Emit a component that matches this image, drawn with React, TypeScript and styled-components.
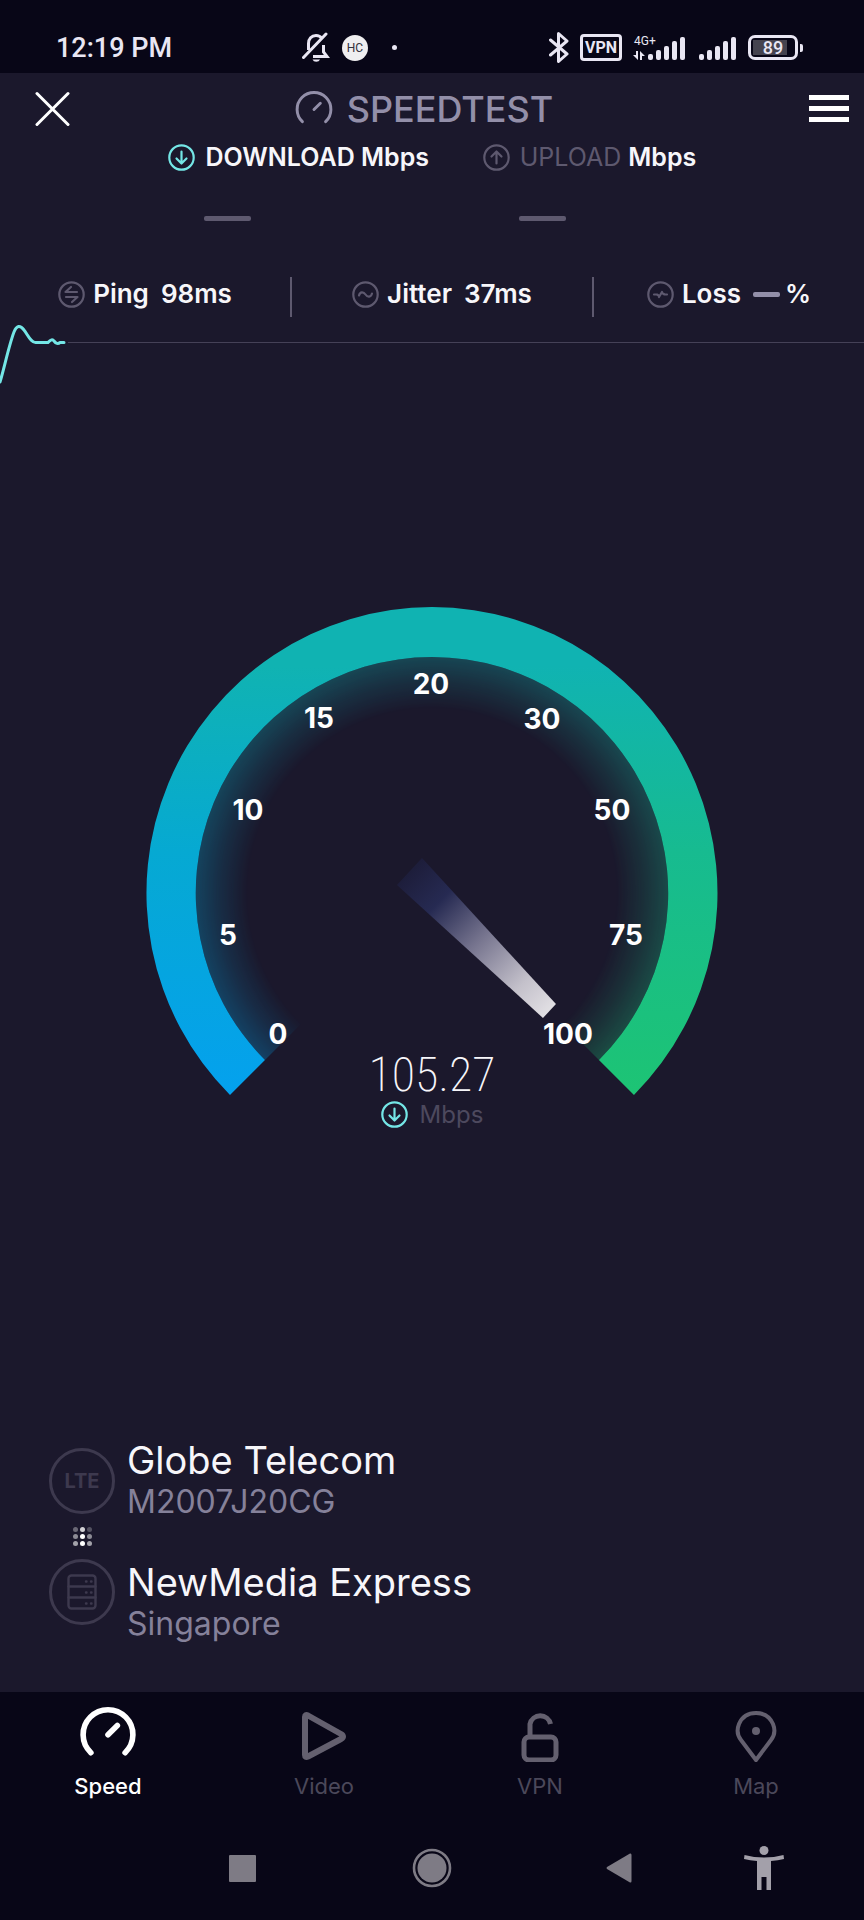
import React from "react";
import styled, { createGlobalStyle } from "styled-components";

const color = {
  page: "#1b182c",
  bar: "#080617",
  text: "#f7f6fa",
  title: "#938fa9",
  sub: "#85819a",
  muted: "#5e596f",
  faint: "#3d394e",
  cyan: "#74e6e6",
};

const GlobalStyle = createGlobalStyle`
  *, *::before, *::after { box-sizing: border-box; }
  body {
    margin: 0;
    background: ${color.bar};
    color: ${color.text};
    font-family: Inter, "Liberation Sans", sans-serif;
  }
  button {
    border: 0;
    padding: 0;
    background: none;
    color: inherit;
    font: inherit;
    cursor: pointer;
  }
  svg { display: block; flex: none; }
`;

const Screen = styled.div`
  display: flex;
  flex-direction: column;
  min-height: 100vh;
  background: ${color.page};
`;

/* ---------- status bar ---------- */

const StatusBar = styled.header`
  display: grid;
  grid-template-columns: auto 1fr auto;
  align-items: center;
  height: 73px;
  padding: 22px 60px 0 56px;
  background: ${color.bar};
  color: #e9e6f3;
  font-family: Roboto, sans-serif;
`;

const Clock = styled.time`
  width: 246px;
  font-size: 27px;
  line-height: 32px;
  font-weight: 500;
`;

const StatusGroup = styled.div<{ $gap: number }>`
  display: flex;
  align-items: center;
  gap: ${(p) => p.$gap}px;
`;

const ContactBadge = styled.span`
  display: grid;
  place-items: center;
  width: 26px;
  height: 26px;
  border-radius: 50%;
  background: #efeef0;
  color: #33313c;
  font-size: 12px;
  line-height: 12px;
`;

const MoreDot = styled.span`
  width: 5px;
  height: 5px;
  margin-left: 12px;
  border-radius: 50%;
  background: #e9e6f3;
`;

const VpnBadge = styled.span`
  width: 42px;
  height: 27px;
  border: 3px solid currentColor;
  border-radius: 4px;
  font-size: 16px;
  line-height: 21px;
  font-weight: 700;
  text-align: center;
`;

const Battery = styled.span`
  position: relative;
  width: 50px;
  height: 25px;
  margin-right: 6px;
  border: 3px solid currentColor;
  border-radius: 7px;
  background: linear-gradient(#45434f, #45434f) 2px 2px / 34px 15px no-repeat;
  font-size: 18px;
  line-height: 20px;
  font-weight: 500;
  text-align: center;

  &::after {
    content: "";
    position: absolute;
    top: 6px;
    right: -8px;
    width: 3px;
    height: 8px;
    border-radius: 0 2px 2px 0;
    background: currentColor;
  }
`;

const BellOff = () => (
  <svg width="28" height="31" viewBox="0 0 28 31" fill="none" stroke="currentColor" strokeWidth="3">
    <path d="M20 6.500C18.500 4.500 16.500 3.500 14 3.500C9.500 3.500 6.500 7 6.500 11.500V18" />
    <path d="M11 24.500H25L21.500 20V13" />
    <path d="M1.500 25.500L24 2" strokeLinecap="round" />
    <path d="M10.500 27.500H18A4 3.500 0 0 1 10.500 27.500Z" fill="currentColor" stroke="none" />
  </svg>
);

const BluetoothIcon = () => (
  <svg width="20" height="31" viewBox="0 0 20 31" fill="none" stroke="currentColor" strokeWidth="3" strokeLinejoin="round" strokeLinecap="round">
    <path d="M1.500 8L18 22L9.500 29.500V1.500L18 9L1.500 23" />
  </svg>
);

const bars = [0, 1, 2, 3, 4];

const CellSignal = () => (
  <svg width="54" height="28" viewBox="0 0 54 28" fill="currentColor">
    <text x="1" y="11" fontSize="12" fontFamily="Roboto, sans-serif">4G+</text>
    <path d="M5 17V26L0 21H3V17ZM7 26V17L12 22H9V26Z" />
    {bars.map((i) => (
      <rect key={i} x={15 + i * 8} y={[20, 16, 12, 7, 3][i]} width="5" height={[6, 10, 14, 19, 23][i]} rx="2" />
    ))}
  </svg>
);

const Signal = () => (
  <svg width="39" height="28" viewBox="0 0 39 28" fill="currentColor">
    {bars.map((i) => (
      <rect key={i} x={1 + i * 8} y={[20, 16, 12, 7, 3][i]} width="5" height={[6, 10, 14, 19, 23][i]} rx="2" />
    ))}
  </svg>
);

/* ---------- title bar ---------- */

const TitleBar = styled.div`
  display: flex;
  align-items: center;
  justify-content: space-between;
  height: 71px;
  padding: 0 15px 0 35px;
`;

const IconButton = styled.button`
  display: grid;
  place-items: center;
  width: 40px;
  height: 40px;
`;

const Brand = styled.h1`
  display: flex;
  align-items: center;
  gap: 14px;
  margin: 0;
  padding-right: 36px;
  color: ${color.title};
  font-size: 36px;
  line-height: 40px;
  font-weight: 500;
`;

const GaugeIcon = ({ size, stroke }: { size: number; stroke: number }) => (
  <svg width={size} height={size} viewBox="0 0 36 36" fill="none" stroke="currentColor" strokeWidth={stroke} strokeLinecap="round">
    <path d="M7 30A16 16 0 1 1 29 30" />
    <path d="M18 18.500L24 12.500" />
  </svg>
);

/* ---------- results ---------- */

const Results = styled.section`
  display: grid;
  grid-template-columns: 314fr 381fr;
  padding-left: 19.500%;
`;

const Result = styled.div`
  display: flex;
  flex-direction: column;
  gap: 45px;
`;

const ResultTitle = styled.div`
  display: flex;
  align-items: center;
  gap: 10px;
  font-size: 25px;
  line-height: 27px;
  font-weight: 600;
  white-space: nowrap;
`;

const ResultName = styled.span<{ $idle?: boolean }>`
  color: ${(p) => (p.$idle ? color.muted : color.text)};
  font-weight: ${(p) => (p.$idle ? 400 : 600)};

  & + & { margin-left: -3px; }
`;

const Dash = styled.span<{ $small?: boolean }>`
  width: ${(p) => (p.$small ? 27 : 47)}px;
  height: 5px;
  margin-left: ${(p) => (p.$small ? 0 : 36)}px;
  border-radius: 2px;
  background: ${(p) => (p.$small ? color.title : color.muted)};
`;

const CircleIcon = ({ tint, children }: { tint: string; children: React.ReactNode }) => (
  <svg width="27" height="27" viewBox="0 0 27 27" fill="none" stroke={tint} strokeWidth="2.200" strokeLinecap="round" strokeLinejoin="round">
    <circle cx="13.500" cy="13.500" r="12.200" />
    {children}
  </svg>
);

const DownIcon = () => (
  <CircleIcon tint={color.cyan}>
    <path d="M13.500 7.500V19M8.500 14.500L13.500 19.500L18.500 14.500" />
  </CircleIcon>
);

const Metrics = styled.section`
  display: grid;
  grid-template-columns: 290fr 2px 300fr 2px 270fr;
  height: 40px;
  margin-top: 56px;
`;

const Metric = styled.div`
  display: flex;
  align-items: center;
  justify-content: center;
  gap: 8px;
  height: 34px;
  font-size: 26px;
  line-height: 32px;
  font-weight: 600;
`;

const MetricValue = styled.span`
  display: flex;
  align-items: center;
  gap: 5px;
  margin-left: 4px;
`;

const Divider = styled.span`
  background: ${color.muted};
`;

const Trace = styled.div`
  display: flex;
  align-items: center;
  height: 64px;
  margin-top: -6px;

  &::after {
    content: "";
    flex: 1;
    height: 1px;
    margin-bottom: 1px;
    background: #454157;
  }
`;

const TraceLine = styled.svg`
  overflow: visible;
`;

/* ---------- gauge ---------- */

const GaugeArea = styled.section`
  display: grid;
  width: 66.200%;
  margin: 232px auto 0;
`;

const Dial = styled.svg`
  grid-area: 1 / 1;
  width: 100%;
  height: auto;
`;

const Reading = styled.div`
  grid-area: 1 / 1;
  align-self: end;
  justify-self: center;
  display: flex;
  flex-direction: column;
  align-items: center;
`;

const Speed = styled.output`
  font-family: "Roboto Condensed", Roboto, sans-serif;
  font-size: 48px;
  line-height: 52px;
  font-weight: 200;
`;

const Unit = styled.div`
  display: flex;
  align-items: center;
  gap: 12px;
  color: #4d495e;
  font-size: 24px;
  line-height: 27px;
`;

const ticks: [string, number, number][] = [
  ["0", 132, 437],
  ["5", 82, 338],
  ["10", 102, 213],
  ["15", 173, 121],
  ["20", 285, 87],
  ["30", 396, 122],
  ["50", 466, 213],
  ["75", 480, 338],
  ["100", 422, 437],
];

const Gauge = () => (
  <Dial viewBox="0 0 572 521" role="img" aria-label="Speed gauge">
    <defs>
      <linearGradient id="left" gradientUnits="userSpaceOnUse" x1="0" y1="488" x2="0" y2="0">
        <stop offset="0" stopColor="#04a1ee" />
        <stop offset="0.500" stopColor="#06a9d2" />
        <stop offset="0.880" stopColor="#10b3b2" />
        <stop offset="1" stopColor="#10b3b2" />
      </linearGradient>
      <linearGradient id="right" gradientUnits="userSpaceOnUse" x1="0" y1="488" x2="0" y2="0">
        <stop offset="0" stopColor="#1dc474" />
        <stop offset="0.500" stopColor="#17bb90" />
        <stop offset="0.880" stopColor="#10b3b2" />
        <stop offset="1" stopColor="#10b3b2" />
      </linearGradient>
      <radialGradient id="fade" gradientUnits="userSpaceOnUse" cx="286" cy="286" r="236">
        <stop offset="0.780" stopColor="#fff" stopOpacity="0" />
        <stop offset="0.900" stopColor="#fff" stopOpacity="0.150" />
        <stop offset="1" stopColor="#fff" stopOpacity="0.300" />
      </radialGradient>
      <mask id="glow" maskUnits="userSpaceOnUse" x="0" y="0" width="572" height="521">
        <rect width="572" height="521" fill="url(#fade)" />
      </mask>
      <linearGradient id="needle" gradientUnits="userSpaceOnUse" x1="262" y1="264" x2="404" y2="405">
        <stop offset="0" stopColor="#1d1d3a" />
        <stop offset="0.220" stopColor="#262a52" />
        <stop offset="0.500" stopColor="#77758f" />
        <stop offset="0.800" stopColor="#c3c0ca" />
        <stop offset="1" stopColor="#e2e0e4" />
      </linearGradient>
    </defs>
    <g mask="url(#glow)">
      <path d="M286 286L119 453A236 236 0 0 1 287 50V286Z" fill="url(#left)" />
      <path d="M286 286L453 453A236 236 0 0 0 286 50Z" fill="url(#right)" />
    </g>
    <path d="M84 488A286 286 0 0 1 287 0V50A236 236 0 0 0 119 453Z" fill="url(#left)" />
    <path d="M488 488A286 286 0 0 0 286 0V50A236 236 0 0 1 453 453Z" fill="url(#right)" />
    <path d="M276 251L251 278L397 411L410 397Z" fill="url(#needle)" />
    <g fill="#fff" fontFamily="Inter, sans-serif" fontSize="28" fontWeight="700" textAnchor="middle">
      {ticks.map(([label, x, y]) => (
        <text key={label} x={x} y={y}>{label}</text>
      ))}
    </g>
  </Dial>
);

/* ---------- connection ---------- */

const Connection = styled.section`
  display: grid;
  grid-template-columns: 66px 1fr;
  column-gap: 12px;
  margin-top: auto;
  padding: 0 49px 48px;
`;

const Path = styled.div`
  display: flex;
  flex-direction: column;
  align-items: center;
  gap: 12px;
  padding-top: 10px;
`;

const Node = styled.span`
  display: grid;
  place-items: center;
  width: 66px;
  height: 66px;
  border: 3px solid ${color.faint};
  border-radius: 50%;
  color: ${color.faint};
  font-size: 20px;
  line-height: 24px;
  font-weight: 700;
`;

const Endpoints = styled.div`
  display: flex;
  flex-direction: column;
  gap: 38px;
`;

const EndpointName = styled.div`
  font-size: 38px;
  line-height: 44px;
`;

const EndpointDetail = styled.div`
  color: ${color.sub};
  font-size: 32px;
  line-height: 40px;
`;

const dotOpacity = [0.350, 0.800, 0.250, 0.500, 1, 0.500, 0.600, 1, 0.600];

/* ---------- bottom navigation ---------- */

const Tabs = styled.nav`
  display: grid;
  grid-template-columns: repeat(4, 1fr);
  height: 120px;
  background: ${color.bar};
`;

const Tab = styled.button<{ $active?: boolean }>`
  display: flex;
  flex-direction: column;
  align-items: center;
  gap: 10px;
  padding-top: 14px;
  color: ${(p) => (p.$active ? "#fff" : "#64606f")};
`;

const TabLabel = styled.span<{ $active?: boolean }>`
  color: ${(p) => (p.$active ? "#fff" : "#4b485a")};
  font-size: 22px;
  line-height: 28px;
  font-weight: ${(p) => (p.$active ? 500 : 400)};
`;

const SystemBar = styled.nav`
  display: grid;
  grid-template-columns: 148fr 189fr 190fr 184fr 106fr 47fr;
  align-items: center;
  height: 108px;
  padding-top: 4px;
  background: ${color.bar};
  color: #7e7b85;
`;

const SystemButton = styled.button<{ $first?: boolean }>`
  display: grid;
  place-items: center;
  height: 60px;
  grid-column: ${(p) => (p.$first ? 2 : "auto")};
`;

export default function App() {
  return (
    <>
      <GlobalStyle />
      <Screen>
        <StatusBar>
          <Clock>12:19 PM</Clock>
          <StatusGroup $gap={12}>
            <BellOff />
            <ContactBadge>HC</ContactBadge>
            <MoreDot />
          </StatusGroup>
          <StatusGroup $gap={11}>
            <BluetoothIcon />
            <VpnBadge>VPN</VpnBadge>
            <CellSignal />
            <Signal />
            <Battery>89</Battery>
          </StatusGroup>
        </StatusBar>

        <TitleBar>
          <IconButton aria-label="Close">
            <svg width="40" height="40" viewBox="0 0 40 40" stroke="#fff" strokeWidth="3" strokeLinecap="round">
              <path d="M2 4.500L33 35.500M33 4.500L2 35.500" />
            </svg>
          </IconButton>
          <Brand>
            <GaugeIcon size={38} stroke={2.800} />
            SPEEDTEST
          </Brand>
          <IconButton aria-label="Menu">
            <svg width="40" height="40" viewBox="0 0 40 40" fill="#fff">
              <path d="M0 6H40V11H0ZM0 17H40V22H0ZM0 28H40V33H0Z" />
            </svg>
          </IconButton>
        </TitleBar>

        <Results>
          <Result>
            <ResultTitle>
              <DownIcon />
              <ResultName>DOWNLOAD Mbps</ResultName>
            </ResultTitle>
            <Dash />
          </Result>
          <Result>
            <ResultTitle>
              <CircleIcon tint={color.muted}>
                <path d="M13.500 19.500V8M8.500 12.500L13.500 7.500L18.500 12.500" />
              </CircleIcon>
              <ResultName $idle>UPLOAD</ResultName>
              <ResultName>Mbps</ResultName>
            </ResultTitle>
            <Dash />
          </Result>
        </Results>

        <Metrics>
          <Metric>
            <CircleIcon tint={color.muted}>
              <path d="M19 11H7.500L13 6M8 16H19.500L14 21" />
            </CircleIcon>
            Ping
            <MetricValue>98ms</MetricValue>
          </Metric>
          <Divider />
          <Metric>
            <CircleIcon tint={color.muted}>
              <path d="M7 14.500C8 10.500 11.500 10.500 13.500 13.500S19 16.500 20 12.500" />
            </CircleIcon>
            Jitter
            <MetricValue>37ms</MetricValue>
          </Metric>
          <Divider />
          <Metric>
            <CircleIcon tint={color.muted}>
              <path d="M7 13.500H10L11.500 14.500M12 16L15 11M16 12.500L17.500 13.500H20" />
            </CircleIcon>
            Loss
            <MetricValue>
              <Dash $small />%
            </MetricValue>
          </Metric>
        </Metrics>

        <Trace>
          <TraceLine width="68" height="64" viewBox="0 0 68 64" fill="none" stroke={color.cyan} strokeWidth="3" strokeLinecap="round" strokeLinejoin="round">
            <path d="M0 71C4 58 9 34 14 21Q18 11 24 19C28 24 31 32 36 31.500H48Q52 27 54 30Q57 34 60 31.500H64" />
          </TraceLine>
        </Trace>

        <GaugeArea>
          <Gauge />
          <Reading>
            <Speed>105.27</Speed>
            <Unit>
              <DownIcon />
              Mbps
            </Unit>
          </Reading>
        </GaugeArea>

        <Connection>
          <Path>
            <Node>LTE</Node>
            <svg width="21" height="21" viewBox="0 0 21 21" fill="#fff">
              {dotOpacity.map((opacity, i) => (
                <circle key={i} cx={3.500 + (i % 3) * 7} cy={3.500 + Math.floor(i / 3) * 7} r="2.500" opacity={opacity} />
              ))}
            </svg>
            <Node>
              <svg width="30" height="36" viewBox="0 0 30 36" fill="none" stroke="currentColor" strokeWidth="2.400" strokeLinecap="round">
                <rect x="1.500" y="1.500" width="27" height="33" rx="3" />
                <path d="M1.500 12.500H28.500M1.500 23.500H28.500M19 7.500H19.500M24 7.500H24.500M19 18.500H19.500M24 18.500H24.500M19 29.500H19.500M24 29.500H24.500" />
              </svg>
            </Node>
          </Path>
          <Endpoints>
            <div>
              <EndpointName>Globe Telecom</EndpointName>
              <EndpointDetail>M2007J20CG</EndpointDetail>
            </div>
            <div>
              <EndpointName>NewMedia Express</EndpointName>
              <EndpointDetail>Singapore</EndpointDetail>
            </div>
          </Endpoints>
        </Connection>

        <Tabs aria-label="Sections">
          <Tab $active aria-current="page">
            <GaugeIcon size={56} stroke={3.600} />
            <TabLabel $active>Speed</TabLabel>
          </Tab>
          <Tab>
            <svg width="56" height="56" viewBox="0 0 56 56" fill="none" stroke="currentColor" strokeWidth="6" strokeLinejoin="round">
              <path d="M9 11V49Q9 52 12 50.500L45 33Q49 30.500 45 28L12 9.500Q9 8 9 11Z" />
            </svg>
            <TabLabel>Video</TabLabel>
          </Tab>
          <Tab>
            <svg width="56" height="56" viewBox="0 0 56 56" fill="none" stroke="currentColor" strokeWidth="5">
              <rect x="12" y="31" width="32" height="23" rx="5" />
              <path d="M18 31V18A10.500 10.500 0 0 1 38.500 18" />
            </svg>
            <TabLabel>VPN</TabLabel>
          </Tab>
          <Tab>
            <svg width="56" height="56" viewBox="0 0 56 56" fill="none" stroke="currentColor" strokeWidth="4">
              <path d="M28 54L13 34C9 29 9 23 11 18C14 11 20 7 28 7S42 11 45 18C47 23 47 29 43 34Z" />
              <circle cx="28" cy="25" r="4" fill="currentColor" stroke="none" />
            </svg>
            <TabLabel>Map</TabLabel>
          </Tab>
        </Tabs>

        <SystemBar aria-label="System">
          <SystemButton $first aria-label="Recent apps">
            <svg width="27" height="27" viewBox="0 0 27 27" fill="currentColor">
              <rect width="27" height="27" rx="1" />
            </svg>
          </SystemButton>
          <SystemButton aria-label="Home">
            <svg width="40" height="40" viewBox="0 0 40 40" fill="currentColor">
              <circle cx="20" cy="20" r="14.500" />
              <circle cx="20" cy="20" r="18" fill="none" stroke="currentColor" strokeWidth="2.600" />
            </svg>
          </SystemButton>
          <SystemButton aria-label="Back">
            <svg width="26" height="30" viewBox="0 0 26 30" fill="currentColor">
              <path d="M24 0.500Q25.500 0 25.500 2V28Q25.500 30 24 29.500L1 16Q0 15 1 14Z" />
            </svg>
          </SystemButton>
          <SystemButton aria-label="Accessibility">
            <svg width="40" height="44" viewBox="0 0 40 44" fill="#a3a0aa">
              <circle cx="20" cy="4.500" r="4.500" />
              <path d="M0.500 9Q10 11.500 20 11.500T39.500 9L40 13Q34 14.500 27 15V44H22.500V31H17.500V44H13V15Q6 14.500 0 13Z" />
            </svg>
          </SystemButton>
        </SystemBar>
      </Screen>
    </>
  );
}
